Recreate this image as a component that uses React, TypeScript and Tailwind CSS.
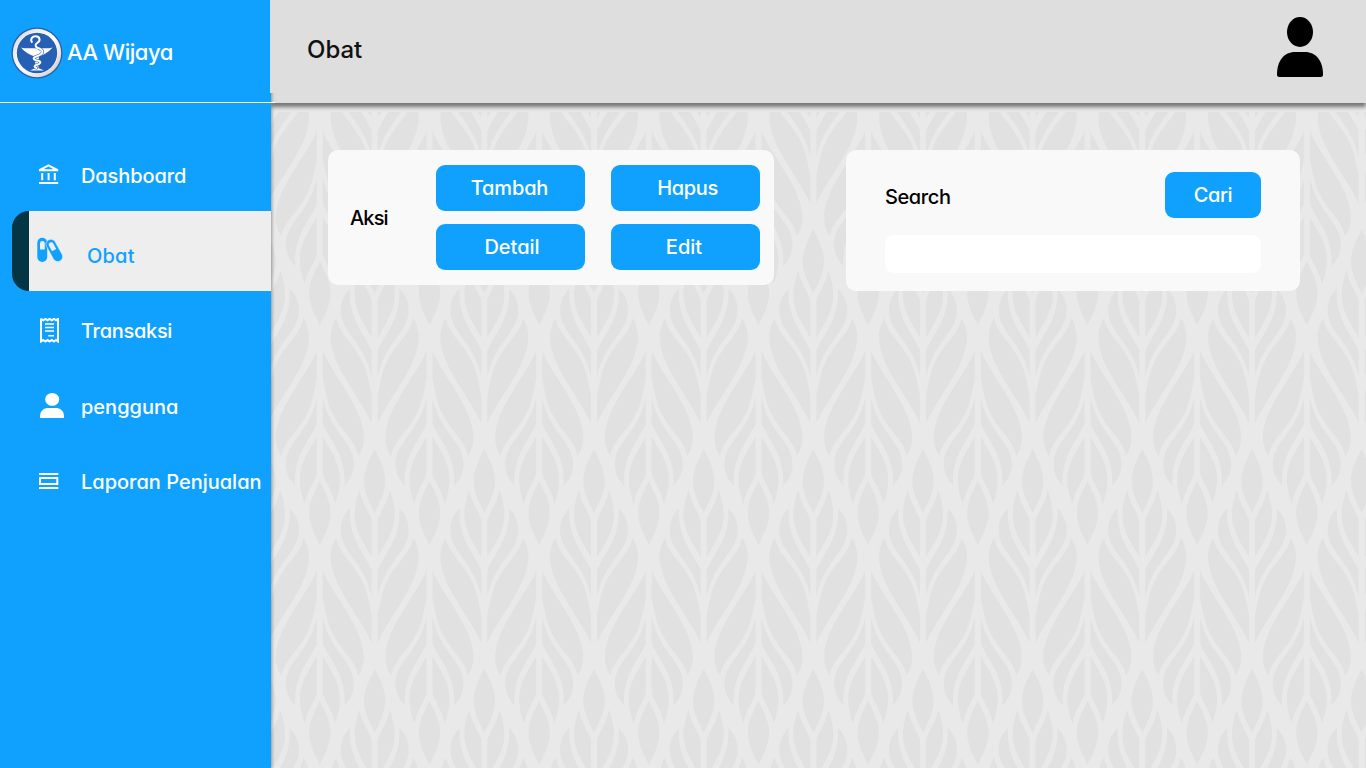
import React from "react";

const FONT = "font-['Inter','Liberation_Sans',sans-serif] [font-feature-settings:'cv11']";

const PETALS = [
  "M9 183C40 258 131 355 132 440C132 462 126 484 115 498C108 452 65 425 38 370C22 340 16 300 9 266Z",
  "M9 323C32 430 102 455 102 522C102 550 90 571 74 587C79 500 38 462 9 402Z",
  "M9 440C28 475 60 518 60 566C60 596 52 624 45 642C41 610 22 585 9 553Z",
];

function Leaf() {
  return (
    <g>
      {PETALS.map((d) => (
        <g key={d}>
          <path d={d} />
          <path d={d} transform="scale(-1 1)" />
        </g>
      ))}
      <path d="M0 573C14 604 32 632 32 669C32 704 14 736 0 765C-14 736 -32 704 -32 669C-32 632 -14 604 0 573Z" />
    </g>
  );
}

const COLS = Array.from({ length: 12 }, (_, i) => i - 3);
const ROWS = [-1, 0, 1, 2, 3];
const SX = 329;
const SY = 659;

function LeafPattern() {
  return (
    <svg className="absolute inset-x-0 top-[9px] h-[656px] w-full" viewBox="271 112 1095 656" preserveAspectRatio="none" fill="#e1e1e1">
      <g transform="translate(520 290) scale(0.33333)">
        {COLS.map((c) =>
          ROWS.map((r) => (
            <g key={`${c}:${r}`}>
              <g transform={`translate(${57.5 + c * SX} ${(r - 1) * SY})`}>
                <Leaf />
              </g>
              <g transform={`translate(${222 + c * SX} ${1242 + (r - 1) * SY}) scale(1 -1)`}>
                <Leaf />
              </g>
            </g>
          )),
        )}
      </g>
    </svg>
  );
}

function Logo() {
  return (
    <svg className="h-[52px] w-[52px] shrink-0" viewBox="0 0 52 52">
      <defs>
        <linearGradient id="ring" x1="0" y1="0" x2="1" y2="1">
          <stop offset="0" stopColor="#d8d5d3" />
          <stop offset="0.5" stopColor="#ffffff" />
          <stop offset="1" stopColor="#c9c6c4" />
        </linearGradient>
      </defs>
      <circle cx="26" cy="26" r="25.500" fill="#2a5ca8" />
      <circle cx="26" cy="26" r="24.200" fill="url(#ring)" />
      <circle cx="26" cy="26" r="20.800" fill="#fff" />
      <circle cx="26" cy="26" r="20.200" fill="#265fb4" />
      <path d="M10 20.500C16 22.200 20 20.500 25.500 21.500C31 20.500 36 22.200 41.500 20.500C38 24.500 33 28.200 28 29.200L27.300 41L33 43.500H19L24.500 41L23.700 29.200C18.500 28.200 13.500 24.500 10 20.500Z" fill="#fff" />
      <g fill="none" strokeLinecap="round">
        <path d="M28 21.500C34.500 23.800 31 27.600 26 29.200C20.500 31 22.500 33.200 27 33.800C31.300 34.600 29 37.200 26 37.800C22.800 38.500 23 40 25.500 41" stroke="#265fb4" strokeWidth="3" />
        <path d="M20.800 15C19 11.500 21.500 9.200 24.500 9.200C29 9.200 29.800 13.600 26.600 15.600C23.500 17.600 24 20 27.500 21.300C34.500 23.800 31 27.600 26 29.200C20.500 31 22.500 33.200 27 33.800C31.300 34.600 29 37.200 26 37.800C22.800 38.500 23 40 25.500 41" stroke="#fff" strokeWidth="2" />
      </g>
    </svg>
  );
}

function BankIcon() {
  return (
    <svg className="h-[21px] w-[20px]" viewBox="0 0 20 21" fill="#fff">
      <path fillRule="evenodd" d="M9.500 0.200L19.200 5.200V7.200H0V5.200ZM9.500 2.400L4.500 5.200H14.600Z" />
      <path d="M2.200 9h2v7.200h-2zM8.600 9h2v7.200h-2zM14.800 9h2v7.200h-2zM0 18h19.200v2H0z" />
    </svg>
  );
}

function PillsIcon() {
  return (
    <svg className="h-[26px] w-[26px]" viewBox="0 0 26 26">
      <rect x="0.300" y="0.800" width="9.900" height="24.200" rx="4.950" fill="#10a1ff" />
      <path d="M3 12.500V6.500a2.400 2.400 0 0 1 4.800 0v6z" fill="#eee" />
      <g transform="rotate(-29 17 13.500)">
        <rect x="12.400" y="1.600" width="9.800" height="24" rx="4.900" fill="#10a1ff" stroke="#eee" strokeWidth="0.500" />
        <path d="M14.900 13.200V7a2.400 2.400 0 0 1 4.800 0v6.200z" fill="#eee" />
      </g>
    </svg>
  );
}

function ReceiptIcon() {
  return (
    <svg className="h-[25px] w-[20px]" viewBox="0 0 20 25" fill="none" stroke="#fff">
      <path strokeWidth="2" d="M1 0.500V23.500L3.200 22L5.400 23.500L7.600 22L9.600 23.500L11.800 22L14 23.500L16 22L18 23.500V0.800L16 2.300L14 0.800L11.800 2.300L9.600 0.800L7.600 2.300L5.400 0.800L3.200 2.300L1 0.800" />
      <path strokeWidth="1.500" d="M5 6h9M5 9.500h9M5 13h9M8.300 17.800h5.700" />
    </svg>
  );
}

function PersonIcon() {
  return (
    <svg className="h-[25px] w-[24px]" viewBox="0 0 24 25" fill="#fff">
      <ellipse cx="12.200" cy="6.400" rx="7" ry="6.400" />
      <path d="M0 25v-2C0 17.500 4.500 15 8 15h8c3.500 0 8 2.500 8 8v2z" />
    </svg>
  );
}

function ReportIcon() {
  return (
    <svg className="h-[17px] w-[20px]" viewBox="0 0 20 17" fill="none" stroke="#fff" strokeWidth="2">
      <path d="M0 1h19.300M0 15h19.300M1 5h17.300v6H1z" />
    </svg>
  );
}

function Avatar() {
  return (
    <svg className="h-[60px] w-[46px]" viewBox="0 0 46 60" fill="#000">
      <ellipse cx="23" cy="15" rx="13" ry="15" />
      <path d="M2.500 60Q0 60 0 57.500C0 44 7 35 18 35H28C39 35 46 44 46 57.500Q46 60 43.500 60Z" />
    </svg>
  );
}

type NavProps = { icon: React.ReactNode; label: string; className: string; iconClass: string; text: string };

function NavItem({ icon, label, className, iconClass, text }: NavProps) {
  return (
    <a className={`flex h-[30px] shrink-0 items-center text-white ${className}`}>
      <span className={`flex w-[42px] shrink-0 ${iconClass}`}>{icon}</span>
      <span className={`whitespace-nowrap text-[20px] leading-[30px] ${text}`}>{label}</span>
    </a>
  );
}

function ActionButton({ label, className }: { label: string; className: string }) {
  return (
    <button className={`flex h-[46px] items-center justify-center rounded-[9px] bg-[#10a1ff] text-[20px] text-white ${className}`}>
      {label}
    </button>
  );
}

export default function App() {
  return (
    <div className={`flex h-[768px] w-[1366px] overflow-hidden bg-[#e9e9e9] font-medium ${FONT}`}>
      <aside className="relative z-20 flex w-[271px] shrink-0 flex-col bg-[#10a1ff] shadow-[1px_0_3px_rgba(0,0,0,0.35)]">
        <div className="absolute -right-[5px] top-0 h-[93px] w-[6.500px] bg-[#dedede]" />
        <div className="flex h-[102px] items-center pl-[11px] pt-[4px]">
          <Logo />
          <span className="ml-[4px] whitespace-nowrap pb-[2px] text-[22px] tracking-[-0.450px] text-white">AA Wijaya</span>
        </div>
        <div className="h-px w-[275px] shrink-0 bg-white" />
        <nav className="flex flex-col">
          <NavItem icon={<BankIcon />} label="Dashboard" className="mt-[58px] pl-[39px]" iconClass="pb-[4px]" text="tracking-[-0.100px]" />
          <a className="mt-[20px] flex h-[80px] pl-[12px]">
            <span className="w-[17px] shrink-0 rounded-l-[17px] bg-[#033544]" />
            <span className="flex flex-1 bg-[#eee] pl-[8px]">
              <span className="w-[50px] pt-[26px]">
                <PillsIcon />
              </span>
              <span className="pt-[30px] text-[20px] leading-[30px] tracking-[0.200px] text-[#10a1ff]">Obat</span>
            </span>
          </a>
          <NavItem icon={<ReceiptIcon />} label="Transaksi" className="mt-[25px] pl-[39px]" iconClass="pb-[2px] pl-[1px]" text="tracking-[-0.300px]" />
          <NavItem icon={<PersonIcon />} label="pengguna" className="mt-[46px] pl-[39px]" iconClass="pb-[3px] pl-[1px]" text="" />
          <NavItem icon={<ReportIcon />} label="Laporan Penjualan" className="mt-[45px] pl-[39px]" iconClass="pb-[2px]" text="" />
        </nav>
      </aside>

      <div className="flex flex-1 flex-col">
        <header className="relative z-10 flex h-[103px] shrink-0 justify-between bg-[#dedede] pl-[36px] pr-[43px] shadow-[0_4px_4px_rgba(0,0,0,0.5)]">
          <h1 className="pt-[32px] text-[24px] font-medium leading-[36px] text-[#111] [font-feature-settings:normal]">Obat</h1>
          <div className="pt-[17px]">
            <Avatar />
          </div>
        </header>

        <main className="relative flex flex-1 items-start pl-[57px] pt-[47px]">
          <LeafPattern />
          <section className="relative flex h-[135px] w-[446px] items-center rounded-[10px] bg-[#f9f9f9] pl-[22px]">
            <span className="w-[86px] text-[20px] tracking-[-0.850px] text-black">Aksi</span>
            <div className="grid grid-cols-2 gap-x-[26px] gap-y-[13px]">
              <ActionButton label="Tambah" className="w-[149px] pr-[2px] tracking-[-0.150px]" />
              <ActionButton label="Hapus" className="w-[149px] pl-[4px] tracking-[-0.350px]" />
              <ActionButton label="Detail" className="w-[149px] pl-[3px]" />
              <ActionButton label="Edit" className="w-[149px] pr-[3px]" />
            </div>
          </section>
          <section className="relative ml-[72px] h-[141px] w-[454px] rounded-[10px] bg-[#f9f9f9] px-[39px] pt-[22px]">
            <div className="flex items-start justify-between">
              <span className="pt-[10px] text-[20px] leading-[30px] tracking-[-0.400px] text-black">Search</span>
              <ActionButton label="Cari" className="w-[96px] tracking-[-0.400px]" />
            </div>
            <input className="mt-[17px] block h-[38px] w-full rounded-[9px] bg-white px-3 outline-none" />
          </section>
        </main>
      </div>
    </div>
  );
}
